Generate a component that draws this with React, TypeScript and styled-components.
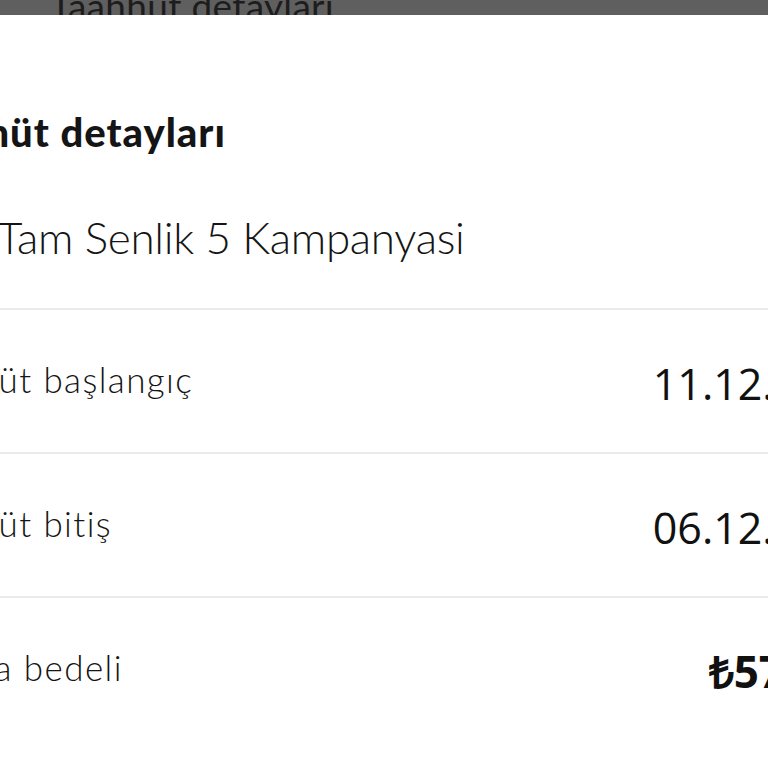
import styled, { createGlobalStyle } from "styled-components";

const GlobalStyle = createGlobalStyle`
  html, body {
    margin: 0;
    padding: 0;
    background: #ffffff;
    overflow: hidden;
  }
`;

const rows = [
  { label: "Taahhüt başlangıç", value: "11.12.2023", strong: false },
  { label: "Taahhüt bitiş", value: "06.12.2025", strong: false },
  { label: "Cayma bedeli", value: "₺570,00", strong: true },
];

export default function App() {
  return (
    <Page>
      <GlobalStyle />
      <Scrim>
        <ScrimTitle>Taahhüt detayları</ScrimTitle>
      </Scrim>

      <Sheet>
        <Heading>Taahhüt detayları</Heading>
        <CampaignName>Tam Senlik 5 Kampanyasi</CampaignName>

        {rows.map((row) => (
          <DetailRow key={row.label}>
            <Label>{row.label}</Label>
            <Value $strong={row.strong}>{row.value}</Value>
          </DetailRow>
        ))}
      </Sheet>
    </Page>
  );
}

// page behind the sheet is dimmed, only a sliver shows at the top
const Page = styled.div`
  width: 768px;
  height: 768px;
  overflow: hidden;
  background: #ffffff;
`;

const Scrim = styled.div`
  height: 15px;
  overflow: hidden;
  background-color: #5f5f5f;
`;

const ScrimTitle = styled.div`
  margin-top: -13px;
  padding-left: 50px;
  font-family: Lato, "Liberation Sans", sans-serif;
  font-size: 37px;
  line-height: 37px;
  letter-spacing: 0.3px;
  color: #1d1d1d;
  white-space: nowrap;
`;

// the sheet is wider than the viewport (zoomed screenshot)
const Sheet = styled.section`
  width: 969px;
  margin-left: -97px;
  background: #ffffff;
  color: #151515;
`;

const Heading = styled.h2`
  margin: 0;
  padding-top: 97px;
  text-indent: -4px;
  font-family: Lato, "Liberation Sans", sans-serif;
  font-weight: 900;
  font-size: 40px;
  line-height: 40px;
  letter-spacing: 1px;
  white-space: nowrap;
`;

const CampaignName = styled.div`
  padding: 63px 0 49px 94px;
  font-family: Lato, "Liberation Sans", sans-serif;
  font-weight: 300;
  font-size: 44px;
  line-height: 44px;
  letter-spacing: -0.3px;
  white-space: nowrap;
`;

const DetailRow = styled.div`
  display: flex;
  align-items: flex-start;
  justify-content: space-between;
  padding: 52px 0 47px;
  border-top: 2px solid #ebebeb;
`;

const Label = styled.span`
  font-family: Lato, "Liberation Sans", sans-serif;
  font-weight: 300;
  font-size: 35px;
  line-height: 35px;
  letter-spacing: 1.4px;
  white-space: nowrap;
`;

const Value = styled.span<{ $strong: boolean }>`
  font-family: "Open Sans", "Liberation Sans", sans-serif;
  font-weight: ${(p) => (p.$strong ? 700 : 400)};
  font-size: ${(p) => (p.$strong ? "44px" : "43px")};
  line-height: 43px;
  color: #111111;
  white-space: nowrap;
`;
